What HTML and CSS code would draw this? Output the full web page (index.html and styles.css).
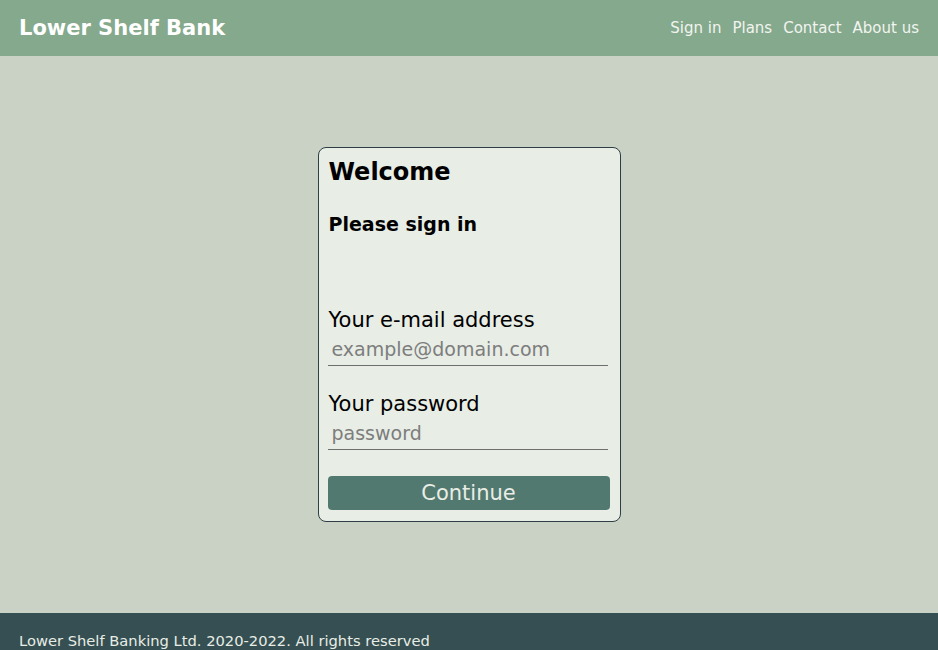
FILE: index.html
```html
<!DOCTYPE html>
<html lang="en">
<head>
<meta charset="utf-8">
<title>Lower Shelf Bank</title>
<link rel="stylesheet" href="styles.css">
</head>
<body>
<div class="page">
  <header class="topbar">
    <div class="brand">Lower Shelf Bank</div>
    <nav class="nav">
      <a href="#">Sign in</a>
      <a href="#">Plans</a>
      <a href="#">Contact</a>
      <a href="#">About us</a>
    </nav>
  </header>
  <main class="main">
    <form class="card">
      <h2 class="title">Welcome</h2>
      <h3 class="subtitle">Please sign in</h3>
      <label class="label label-first" for="email">Your e-mail address</label>
      <input class="field" id="email" type="email" placeholder="example@domain.com">
      <label class="label" for="pw">Your password</label>
      <input class="field" id="pw" type="password" placeholder="password">
      <button class="btn" type="button">Continue</button>
    </form>
  </main>
  <footer class="footer">Lower Shelf Banking Ltd. 2020-2022. All rights reserved</footer>
</div>
</body>
</html>
```
FILE: styles.css
```css
* { box-sizing: border-box; }
html, body { margin: 0; padding: 0; }
body {
  font-family: "DejaVu Sans", sans-serif;
  background: #cad2c5;
  color: #000;
}
.page {
  display: flex;
  flex-direction: column;
  height: 650px;
  overflow: hidden;
}
.topbar {
  height: 56px;
  flex: none;
  background: #84a98c;
  display: flex;
  align-items: center;
  justify-content: space-between;
  padding: 0 19px;
}
.brand {
  color: #fff;
  font-weight: 700;
  font-size: 21px;
  line-height: 26px;
}
.nav {
  display: flex;
  gap: 11px;
}
.nav a {
  color: #f2f4f0;
  text-decoration: none;
  font-size: 15px;
  line-height: 20px;
}
.main {
  flex: 1;
  display: flex;
  align-items: center;
  justify-content: center;
}
.card {
  width: 303px;
  background: #e8ede6;
  border: 1px solid #2f3e46;
  border-radius: 8px;
  padding: 10px 10px 11px 9px;
  display: flex;
  flex-direction: column;
}
.title {
  margin: 0 0 0 1px;
  font-size: 24px;
  font-weight: 700;
  line-height: 28px;
}
.subtitle {
  margin: 26px 0 0 1px;
  font-size: 19px;
  font-weight: 700;
  line-height: 24px;
}
.label {
  font-size: 21px;
  line-height: 26px;
  margin: 25px 0 0 1px;
}
.label-first { margin-top: 71px; }
.field {
  width: 280px;
  height: 33px;
  font-family: inherit;
  font-size: 19px;
  line-height: 22px;
  border: none;
  border-bottom: 1px solid #6e6e6e;
  background: transparent;
  padding: 5px 4px 5px 4px;
  outline: none;
  color: #000;
}
.field::placeholder { color: #7d7d7d; }
.btn {
  margin-top: 26px;
  height: 34px;
  width: 282px;
  background: #52796f;
  color: #e8ede6;
  border: none;
  border-radius: 4px;
  font-family: inherit;
  font-size: 21px;
  padding: 0;
}
.footer {
  height: 37px;
  flex: none;
  background: #354f52;
  color: #e8ede6;
  font-size: 14.7px;
  line-height: 18px;
  padding: 19px 19px 0;
}
```
